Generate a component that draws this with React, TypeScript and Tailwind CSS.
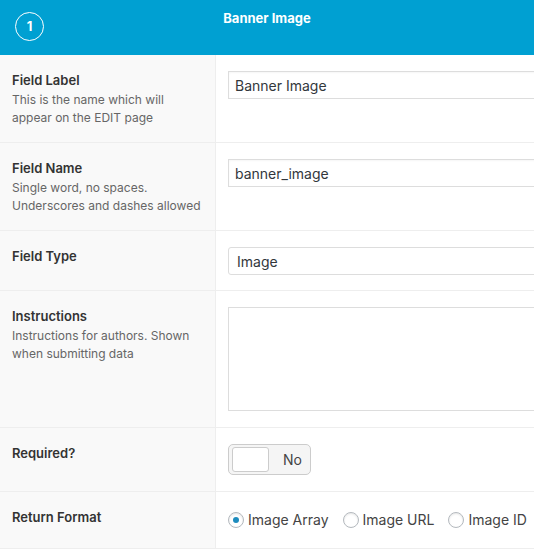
import React from "react";

type Row = {
  label: string;
  desc?: string[];
  field: React.ReactNode;
  fieldPad?: string;
};

const inputCls =
  "block w-[340px] h-[28px] border border-[#dddddd] bg-white px-[6px] text-[14px] text-[#32373c] outline-none shadow-[inset_0_1px_2px_rgba(0,0,0,0.04)]";

function Radio({ checked, label }: { checked?: boolean; label: string }) {
  return (
    <label className="flex shrink-0 items-center gap-[4px] whitespace-nowrap text-[14px] leading-[20px] text-[#444]">
      <span className="flex h-[16px] w-[16px] items-center justify-center rounded-full border border-[#b4b9be] bg-white shadow-[inset_0_1px_2px_rgba(0,0,0,0.1)]">
        {checked && <span className="h-[6px] w-[6px] rounded-full bg-[#1e8cbe]" />}
      </span>
      {label}
    </label>
  );
}

export default function App() {
  const rows: Row[] = [
    {
      label: "Field Label",
      desc: ["This is the name which will", "appear on the EDIT page"],
      field: <input className={inputCls} defaultValue="Banner Image" />,
    },
    {
      label: "Field Name",
      desc: ["Single word, no spaces.", "Underscores and dashes allowed"],
      field: <input className={inputCls} defaultValue="banner_image" />,
    },
    {
      label: "Field Type",
      fieldPad: "pb-[15px]",
      field: (
        <div className="flex h-[28px] w-[340px] items-center rounded-[3px] border border-[#dddddd] bg-white px-[8px] text-[14px] text-[#32373c]">
          Image
        </div>
      ),
    },
    {
      label: "Instructions",
      desc: ["Instructions for authors. Shown", "when submitting data"],
      field: <textarea className="block h-[104px] w-[340px] resize-none border border-[#dddddd] bg-white outline-none" />,
    },
    {
      label: "Required?",
      field: (
        <div className="flex h-[31px] w-[83px] items-center rounded-[5px] border border-[#cccccc] bg-[#f5f5f5] p-[3px]">
          <span className="h-[25px] w-[37px] rounded-[3px] border border-[#cccccc] bg-white" />
          <span className="ml-[14px] text-[14px] text-[#444]">No</span>
        </div>
      ),
    },
    {
      label: "Return Format",
      field: (
        <div className="flex items-center gap-[14px] pt-[2px] pb-[2px]">
          <Radio checked label="Image Array" />
          <Radio label="Image URL" />
          <Radio label="Image ID" />
        </div>
      ),
    },
  ];

  return (
    <div className="h-[550px] w-[534px] overflow-hidden bg-white font-['Inter','Liberation_Sans',sans-serif]">
      <div className="relative h-[55px] bg-[#00a0d2]">
        <div className="absolute left-[15px] top-[12px] flex h-[29px] w-[29px] items-center justify-center rounded-full border-[1.5px] border-white text-[13px] font-bold text-white">
          1
        </div>
        <div className="pt-[8px] text-center text-[13px] leading-[20px] font-bold text-white">Banner Image</div>
      </div>

      {rows.map((r) => (
        <div key={r.label} className="flex border-b border-[#eeeeee]">
          <div className="w-[216px] shrink-0 border-r border-[#eeeeee] bg-[#f9f9f9] px-[12px] pt-[16px] pb-[15px]">
            <div className="text-[13px] leading-[18px] font-semibold text-[#333]">{r.label}</div>
            {r.desc && (
              <div className="mt-[2px] text-[12px] leading-[18px] text-[#666]">
                {r.desc.map((d) => (
                  <div key={d}>{d}</div>
                ))}
              </div>
            )}
          </div>
          <div className={"min-w-0 flex-1 px-[12px] pt-[16px] " + (r.fieldPad ?? "pb-[16px]")}>{r.field}</div>
        </div>
      ))}
    </div>
  );
}
